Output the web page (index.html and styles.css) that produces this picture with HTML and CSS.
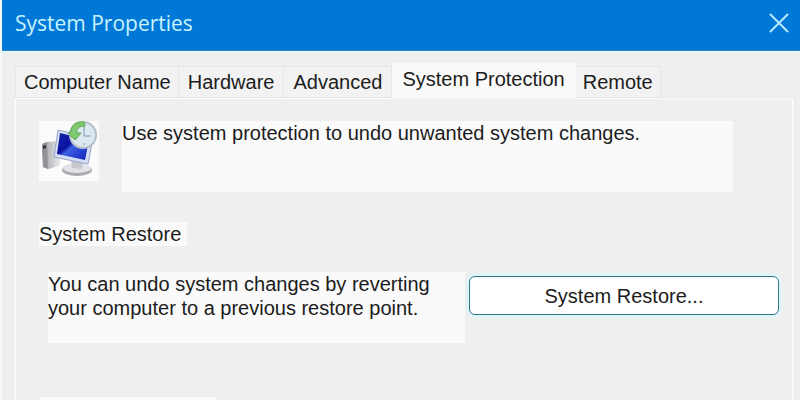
FILE: index.html
```html
<!DOCTYPE html>
<html lang="en">
<head>
  <meta charset="UTF-8" />
  <title>System Properties</title>
  <link rel="stylesheet" href="styles.css">
</head>
<body>
  <div class="window">
    <header class="titlebar">
      <h1>System Properties</h1>
      <button class="close" aria-label="Close">
        <svg width="20" height="20" viewBox="0 0 20 20"><path d="M1 1L19 19M19 1L1 19" /></svg>
      </button>
    </header>
    <div class="tabs" role="tablist">
      <button class="tab" role="tab">Computer Name</button>
      <button class="tab" role="tab">Hardware</button>
      <button class="tab" role="tab">Advanced</button>
      <button class="tab active" role="tab" aria-selected="true">System Protection</button>
      <button class="tab" role="tab">Remote</button>
    </div>
    <main class="panel" role="tabpanel">
      <div class="intro">
        <svg class="icon" width="60" height="60" viewBox="0 0 60 60">
          <defs>
            <linearGradient id="screen" x1="0" y1="0" x2="1" y2="1">
              <stop offset="0" stop-color="#1726a8" />
              <stop offset="0.4" stop-color="#0a12a0" />
              <stop offset="0.5" stop-color="#3d5fe0" />
              <stop offset="1" stop-color="#0c1bb8" />
            </linearGradient>
            <linearGradient id="metal" x1="0" y1="0" x2="1" y2="0">
              <stop offset="0" stop-color="#9b9da1" />
              <stop offset="1" stop-color="#eeeff1" />
            </linearGradient>
          </defs>
          <!-- tower -->
          <path d="M3 23L8 21L19 20L22 44L10 48L4 46Z" fill="url(#metal)" />
          <path d="M3 23L8 21L9 48L4 46Z" fill="#909296" />
          <path d="M4 25L7 24V27L4 28Z" fill="#333" />
          <!-- stand -->
          <ellipse cx="38" cy="49" rx="15" ry="6" fill="#a9abb0" />
          <ellipse cx="38" cy="47" rx="14" ry="5" fill="#e2e3e6" />
          <path d="M32 38L44 40L43 48L33 47Z" fill="#c5c7cd" />
          <!-- monitor -->
          <path d="M19 9L54 17L49 43L15 36Z" fill="#d5ddf2" stroke="#97a5cd" />
          <path d="M21 12L50 19L46 39L18 33Z" fill="url(#screen)" />
          <!-- clock -->
          <circle cx="44" cy="14" r="13" fill="#dce7ef" stroke="#b5c0c6" stroke-width="2" />
          <path d="M45 5V15H52M45 22V24" fill="none" stroke="#7c9db8" />
          <path d="M45 1C36 0 32 5 32 11L29 12L36 19L42 12L38 12C37 8 40 5 46 5Z" fill="#7fca70" stroke="#5aa852" />
        </svg>
        <p class="intro-text">Use system protection to undo unwanted system changes.</p>
      </div>
      <section>
        <h2>System Restore</h2>
        <div class="restore">
          <p class="restore-text">You can undo system changes by reverting<br>your computer to a previous restore point.</p>
          <button class="restore-btn">System Restore...</button>
        </div>
      </section>
      <div class="next-heading"></div>
    </main>
  </div>
</body>
</html>
```

FILE: styles.css
```css
* { box-sizing: border-box; }
body { margin: 0; background: #f8f8f8; color: #1c1c1c; font: 20px/24px "Liberation Sans", Arial, sans-serif; }
h1, h2, p { margin: 0; font-weight: normal; }
button { font: inherit; color: inherit; }
.window { display: flex; flex-direction: column; height: 100vh; margin-left: 2px; background: #efefef; overflow: hidden; }
.titlebar { display: flex; flex: none; align-items: center; justify-content: space-between; height: 51px; padding: 0 11px 4px 13px; background: #0078d7; border-bottom: 1px solid #3588bd; color: #c9f3ff; box-shadow: 0 2px 0 #e2f8fb; }
h1 { font: 21px/28px "Open Sans", "Noto Sans", sans-serif; }
.close { display: flex; padding: 0; background: none; border: 0; }
.close path { fill: none; stroke: #b5eaff; stroke-width: 2; }
.tabs { display: flex; flex: none; align-items: flex-end; position: relative; z-index: 1; margin-top: 12px; padding-left: 13px; }
.tab { height: 32px; padding: 0 9px; background: #f2f2f2; border: 1px solid #e6e6e6; border-left-width: 0; white-space: nowrap; }
.tab:first-child { padding: 0 7px 0 8px; border-left-width: 1px; }
.tab:last-child { padding: 0 7px; }
.tab.active { height: 35px; padding: 0 10px 4px; background: #fafafa; border-color: #f6f6f6; }
.panel { flex: 1; min-height: 0; margin: 0 6px 0 12px; padding: 22px 13px 0 23px; border: solid #fafafa; border-width: 1px 2px 0; outline: 1px solid #e9e9e9; overflow: hidden; }
.intro { display: flex; gap: 23px; }
.icon { flex: none; background: #fbfbfb; }
.intro-text { flex: 1; min-height: 71px; margin-right: 46px; background: #fafafa; }
h2 { width: fit-content; margin-top: 30px; padding-right: 6px; background: #fafafa; font-size: 20px; }
.restore { display: flex; gap: 4px; margin: 26px 0 0 9px; }
.restore-text { flex: 1; min-height: 71px; background: #fafafa; white-space: nowrap; }
.restore-btn { flex: 0 0 310px; height: 39px; margin-top: 4px; background: #fff; border: 1px solid #357482; border-radius: 6px; box-shadow: 0 0 2px 2px #d9f6fb; }
.next-heading { width: 178px; height: 24px; margin-top: 54px; background: #fafafa; }
```
